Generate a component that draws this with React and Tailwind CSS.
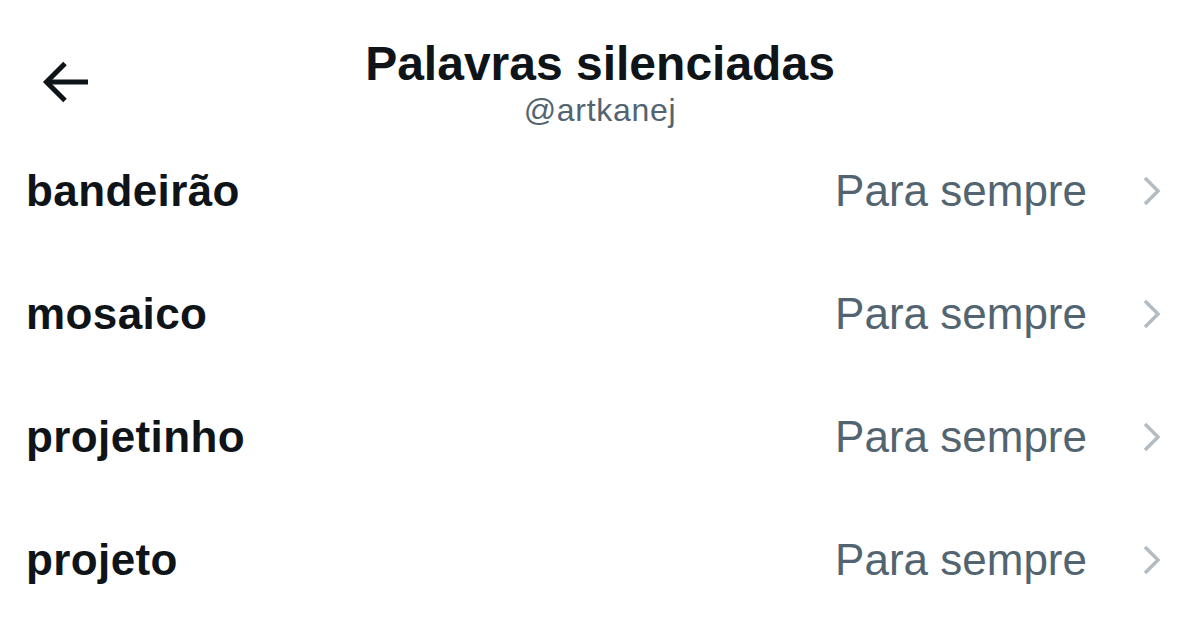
const words = ["bandeirão", "mosaico", "projetinho", "projeto"];

function BackArrow() {
  return (
    <svg width="48" height="44" viewBox="0 0 48 44" fill="none" className="text-[#0f1419]">
      <path d="M46 22H5" stroke="currentColor" strokeWidth="5" />
      <path d="M23 3.5L4.5 22L23 40.5" stroke="currentColor" strokeWidth="5" />
    </svg>
  );
}

function Chevron() {
  return (
    <svg width="20" height="30" viewBox="0 0 20 30" fill="none" className="text-[#b4bcc3]">
      <path d="M3 2L16 15L3 28" stroke="currentColor" strokeWidth="3.5" />
    </svg>
  );
}

export default function App() {
  return (
    <div className="w-[1200px] h-[626px] overflow-hidden bg-white font-['Liberation_Sans',Arial,sans-serif] text-[#0f1419]">
      {/* header */}
      <div className="grid grid-cols-[1fr_auto_1fr] pt-[36px]">
        <div className="pl-[42px] pt-[24px]">
          <BackArrow />
        </div>
        <div className="flex flex-col items-center">
          <h1 className="text-[48px] leading-[56px] font-bold">Palavras silenciadas</h1>
          <p className="text-[32px] leading-[36px] text-[#536471] tracking-[0.7px]">@artkanej</p>
        </div>
        <div />
      </div>

      {/* muted words */}
      <ul className="mt-[1px]">
        {words.map((w) => (
          <li key={w} className="h-[123px] flex items-center pl-[26px] pr-[38px]">
            <span className="flex-1 text-[44px] leading-[52px] font-bold tracking-[0.4px]">{w}</span>
            <span className="text-[44px] leading-[52px] text-[#536471]">Para sempre</span>
            <span className="ml-[55px] flex items-center">
              <Chevron />
            </span>
          </li>
        ))}
      </ul>
    </div>
  );
}
